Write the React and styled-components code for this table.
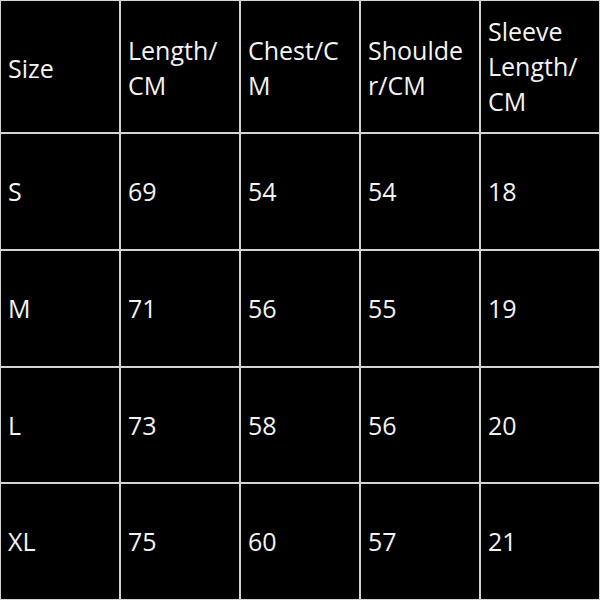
import React from 'react';
import styled, { createGlobalStyle } from 'styled-components';

const Global = createGlobalStyle`
  html, body {
    margin: 0;
    padding: 0;
    background: #000;
  }
`;

const Grid = styled.div`
  width: 600px;
  height: 600px;
  box-sizing: border-box;
  padding: 1px;
  background: #d4d4d4;
  display: grid;
  grid-template-columns: repeat(5, 1fr);
  grid-template-rows: 131px 115px 115px 114px 115px;
  gap: 2px;
`;

const Cell = styled.div`
  background: #000;
  color: #f4f4f4;
  font-family: "Open Sans", "Liberation Sans", sans-serif;
  font-size: 25px;
  line-height: 35px;
  padding: ${(p) => (p.$head ? '3px' : '0')} 0 ${(p) => (p.$tall ? '3px' : '0')} 7px;
  display: flex;
  align-items: center;
  white-space: nowrap;
`;

const header = [
  ['Size'],
  ['Length/', 'CM'],
  ['Chest/C', 'M'],
  ['Shoulde', 'r/CM'],
  ['Sleeve', 'Length/', 'CM'],
];

const rows = [
  ['S', '69', '54', '54', '18'],
  ['M', '71', '56', '55', '19'],
  ['L', '73', '58', '56', '20'],
  ['XL', '75', '60', '57', '21'],
];

export default function App() {
  return (
    <>
      <Global />
      <Grid>
        {header.map((lines, i) => (
          <Cell $head $tall={lines.length > 2} key={'h' + i}>
            <div>
              {lines.map((l, j) => (
                <div key={j}>{l}</div>
              ))}
            </div>
          </Cell>
        ))}
        {rows.map((r, i) =>
          r.map((v, j) => <Cell key={i + '-' + j}>{v}</Cell>)
        )}
      </Grid>
    </>
  );
}
